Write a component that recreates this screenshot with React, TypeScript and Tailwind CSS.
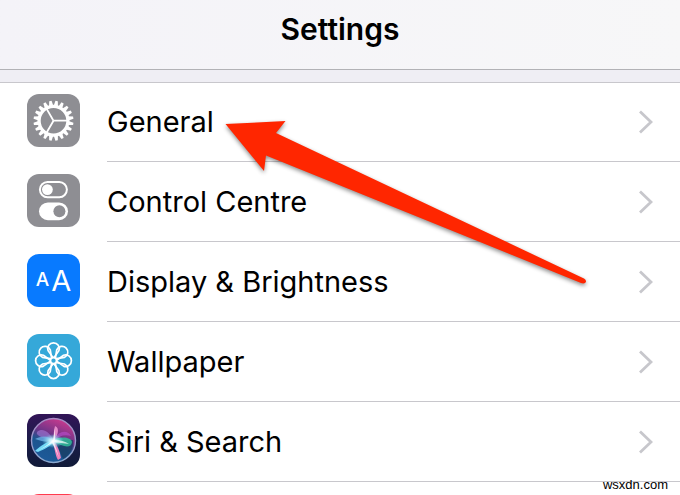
import type { ReactNode } from "react";

const teeth = Array.from({ length: 20 }, (_, i) => i * 18);
const petals = Array.from({ length: 8 }, (_, i) => i * 45);

function GearIcon() {
  return (
    <svg viewBox="0 0 53 53" className="size-full" aria-hidden="true">
      <rect width="53" height="53" fill="#8e8e93" />
      <g transform="translate(26.5 26.7)" fill="none" stroke="#fff">
        {teeth.map((a) => (
          <path key={a} d="M-2.1 -15L-1.2 -20H1.2L2.1 -15Z" transform={`rotate(${a + 9})`} fill="#fff" stroke="none" />
        ))}
        <circle r="14.4" strokeWidth="3.2" />
        <path d="M0 0H14M0 0L-7 -12.1M0 0L-7 12.1" strokeWidth="1.8" />
      </g>
    </svg>
  );
}

function TogglesIcon() {
  return (
    <svg viewBox="0 0 53 53" className="size-full" aria-hidden="true">
      <rect width="53" height="53" fill="#8e8e93" />
      <rect x="12.9" y="8" width="27" height="15.2" rx="7.6" fill="none" stroke="#fff" strokeWidth="2" />
      <circle cx="20.4" cy="15.6" r="5.4" fill="#fff" />
      <rect x="12" y="28.4" width="29" height="17.8" rx="8.9" fill="#fff" />
      <circle cx="32.4" cy="37.3" r="6" fill="#8e8e93" />
    </svg>
  );
}

function TextSizeIcon() {
  return (
    <span className="flex size-full items-center justify-center gap-0.5 bg-[#087aff] font-['Inter',sans-serif] text-white" aria-hidden="true">
      <span className="text-[19px] font-medium">A</span>
      <span className="text-[29px]">A</span>
    </span>
  );
}

function FlowerIcon() {
  return (
    <svg viewBox="0 0 53 53" className="size-full" aria-hidden="true">
      <rect width="53" height="53" fill="#35a8d9" />
      <g transform="translate(26.5 26.7)" fill="none" stroke="#fff" strokeWidth="1.7">
        {petals.map((a) => (
          <path key={a} d="M0 -2.5L-5.4 -10A5.8 5.8 0 1 1 5.4 -10Z" transform={`rotate(${a})`} />
        ))}
        <circle r="3" fill="#35a8d9" />
      </g>
    </svg>
  );
}

function SiriIcon() {
  return (
    <svg viewBox="0 0 53 53" className="size-full" aria-hidden="true">
      <defs>
        <linearGradient id="siri-bg" x2="0" y2="1">
          <stop stopColor="#321457" />
          <stop offset=".5" stopColor="#1b1d49" />
          <stop offset="1" stopColor="#101a38" />
        </linearGradient>
        <linearGradient id="siri-orb" x1=".7" y1="0" x2=".3" y2="1">
          <stop stopColor="#cf3a8e" />
          <stop offset=".4" stopColor="#6c3488" />
          <stop offset=".6" stopColor="#1c558f" />
          <stop offset="1" stopColor="#1d5a9a" />
        </linearGradient>
        <linearGradient id="siri-ring" x2="0" y2="1">
          <stop stopColor="#a98bc5" />
          <stop offset="1" stopColor="#8aa9cf" />
        </linearGradient>
        <radialGradient id="siri-glow">
          <stop stopColor="#fff" />
          <stop offset=".35" stopColor="#c8f7ff" stopOpacity=".85" />
          <stop offset="1" stopColor="#65dbed" stopOpacity="0" />
        </radialGradient>
      </defs>
      <rect width="53" height="53" fill="url(#siri-bg)" />
      <circle cx="26.5" cy="26.5" r="22" fill="url(#siri-orb)" stroke="url(#siri-ring)" strokeWidth="1.4" />
      <path d="M28 26L46 26C47 34 43 41 36 45Z" fill="#183c61" opacity=".75" />
      <path d="M27 27C21 16 15 14 10 18C8 22 18 25 27 27Z" fill="#a77ad8" opacity=".6" />
      <path d="M27 27C26 18 28 13 28 12C33 14 31 21 27 27Z" fill="#f69ad6" opacity=".85" />
      <path d="M27 26C31 17 40 15 44 22C38 20 32 22 27 26Z" fill="#b54ac6" opacity=".7" />
      <path d="M26 26C34 22 44 23 45 28C44 35 36 33 26 27Z" fill="#31bc9a" opacity=".85" />
      <path d="M26 26C17 29 11 34 8 37L11 38C18 35 24 32 27 27Z" fill="#72d9f6" />
      <path d="M26 26C20 21 14 22 8 25C14 27 21 29 26 27Z" fill="#6fb4e8" opacity=".75" />
      <path d="M25 26C28 34 28 41 31 46L34 44C33 37 30 31 27 27Z" fill="#ee80bc" />
      <ellipse cx="26" cy="27" rx="11" ry="7" fill="url(#siri-glow)" />
      <path d="M10 37Q20 32 26 26Q29 33 32 44Q28 34 25 29Q19 33 10 37ZM26 26L28 14L28 26Q36 26 42 30Q34 29 26 28Z" fill="#fff" opacity=".7" />
    </svg>
  );
}

const rows: { label: string; icon: ReactNode }[] = [
  { label: "General", icon: <GearIcon /> },
  { label: "Control Centre", icon: <TogglesIcon /> },
  { label: "Display & Brightness", icon: <TextSizeIcon /> },
  { label: "Wallpaper", icon: <FlowerIcon /> },
  { label: "Siri & Search", icon: <SiriIcon /> },
  { label: "", icon: <span className="block size-full bg-[#ff3b4e]" /> },
];

function SettingsRow({ label, icon }: { label: string; icon: ReactNode }) {
  return (
    <li>
      <a href="#" className="flex pl-[27px] text-black">
        <span className="mt-3 size-[53px] shrink-0 overflow-hidden rounded-xl">{icon}</span>
        <span className="ml-[27px] flex h-20 flex-1 items-center justify-between border-b border-[#c8c7cc] pr-[27px]">
          <span className="text-[29px] leading-8">{label}</span>
          <svg viewBox="0 0 14 24" className="h-6 w-3.5" fill="none" stroke="#c7c7cc" strokeWidth="2.8" aria-hidden="true">
            <path d="M1 1.5L12 12L1 22.5" />
          </svg>
        </span>
      </a>
    </li>
  );
}

export default function App() {
  return (
    <div className="relative h-screen overflow-hidden bg-white font-['Inter',sans-serif]">
      <header className="flex h-[70px] items-center justify-center border-b border-[#b2b2b6] bg-linear-to-r from-[#f4f3f8] to-[#f7f7f8] pb-3">
        <h1 className="text-[30px] leading-8 font-semibold text-black">Settings</h1>
      </header>
      <div className="h-3 bg-[#efeef4]" />
      <ul className="shadow-[inset_0_1px_0_#c8c7cc]">
        {rows.map((row, i) => (
          <SettingsRow key={i} {...row} />
        ))}
      </ul>
      <svg viewBox="0 0 370 170" className="pointer-events-none absolute top-[115px] left-[220px] w-[370px] drop-shadow-[0_2px_2px_rgba(0,0,0,0.45)]" aria-hidden="true">
        <path d="M5.5 9L65.5 6L56 18L364 163.5Q367 165.5 365.5 167.5Q364 169 361 168L46 40.5L44 56Z" fill="#ff2600" />
      </svg>
      <span className="absolute right-3 bottom-0.5 font-['Liberation_Sans',sans-serif] text-[13px] leading-4 text-black">wsxdn.com</span>
    </div>
  );
}
